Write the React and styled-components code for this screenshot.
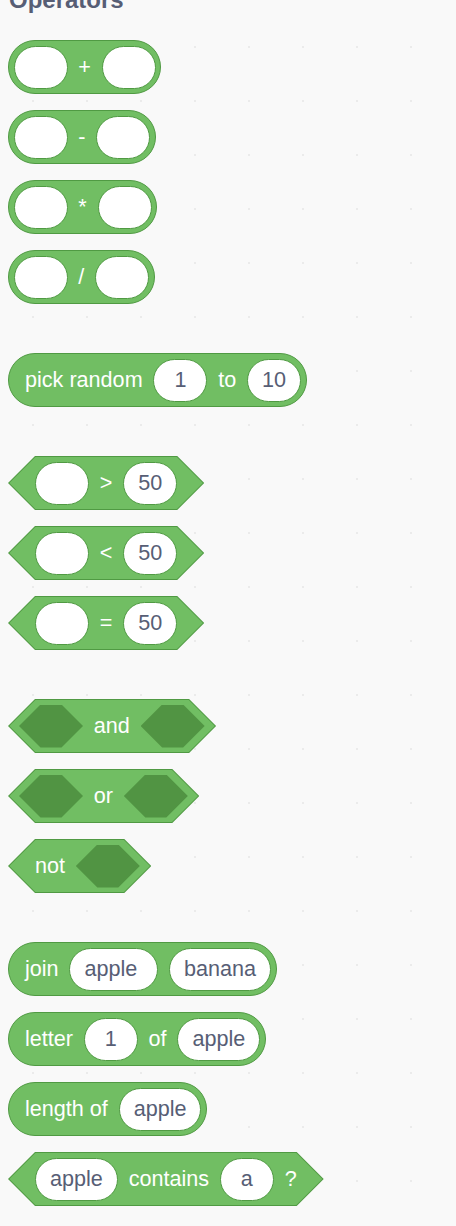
import styled, { createGlobalStyle } from 'styled-components';

const GlobalStyle = createGlobalStyle`
  html, body {
    margin: 0;
    padding: 0;
  }
  body {
    background-color: #f9f9f9;
    background-image: radial-gradient(circle, #ebebeb 1px, transparent 1.5px);
    background-size: 54px 54px;
    background-position: 6px 20px;
    font-family: "Liberation Sans", Arial, sans-serif;
    overflow: hidden;
  }
`

const Page = styled.div`
  display: flex;
  flex-direction: column;
  align-items: flex-start;
  padding-left: 8px;
`

const Heading = styled.h2`
  margin: -12px 0 28px 1px;
  font-size: 24px;
  line-height: 24px;
  font-weight: bold;
  color: #575e75;
`

const Group = styled.div`
  display: flex;
  flex-direction: column;
  align-items: flex-start;
  gap: 16px;

  & + & {
    margin-top: 49px;
  }
`

const Reporter = styled.div`
  display: inline-flex;
  align-items: center;
  gap: 10.8px;
  height: 54px;
  box-sizing: border-box;
  padding: 0 ${props => props.$r === 'text' ? 16 : 4.5}px 0 ${props => props.$l === 'text' ? 16 : 4.5}px;
  background: #71be63;
  border: 1px solid #509a43;
  border-radius: 27px;
`

const Predicate = styled.div`
  position: relative;
  isolation: isolate;
  display: inline-flex;
  align-items: center;
  gap: 10.8px;
  height: 54px;
  box-sizing: border-box;
  padding: 0 ${props => props.$r === 'hex' ? 11.5 : 27}px 0 ${props => props.$l === 'hex' ? 11 : 27}px;

  &::before,
  &::after {
    content: '';
    position: absolute;
    z-index: -1;
  }
  &::before {
    inset: 0;
    background: #509a43;
    clip-path: polygon(27px 0, calc(100% - 27px) 0, 100% 50%, calc(100% - 27px) 100%, 27px 100%, 0 50%);
  }
  &::after {
    inset: 1px 1.4px;
    background: #71be63;
    clip-path: polygon(26px 0, calc(100% - 26px) 0, 100% 50%, calc(100% - 26px) 100%, 26px 100%, 0 50%);
  }
`

const Label = styled.span`
  color: #fff;
  font-size: 21.6px;
  white-space: pre;
`

const Slot = styled.span`
  display: inline-flex;
  align-items: center;
  justify-content: center;
  height: 43px;
  min-width: 54px;
  box-sizing: border-box;
  padding: 0 14px;
  background: #fff;
  border: 1px solid #509a43;
  border-radius: 22px;
  color: #575e75;
  font-size: 21.6px;
  white-space: pre;
`

const BoolSlot = styled.span`
  display: block;
  width: 64px;
  height: 43px;
  background: #519443;
  clip-path: polygon(21.5px 0, calc(100% - 21.5px) 0, 100% 50%, calc(100% - 21.5px) 100%, 21.5px 100%, 0 50%);
`

const math = ['+', '-', '*', '/']
const compare = ['>', '<', '=']

export default function App() {
  return (
    <>
      <GlobalStyle />
      <Page>
        <Heading>Operators</Heading>

        <Group>
          {math.map(op => (
            <Reporter key={op}>
              <Slot />
              <Label>{op}</Label>
              <Slot />
            </Reporter>
          ))}
        </Group>

        <Group>
          <Reporter $l="text">
            <Label>pick random</Label>
            <Slot>1</Slot>
            <Label>to</Label>
            <Slot>10</Slot>
          </Reporter>
        </Group>

        <Group>
          {compare.map(op => (
            <Predicate key={op}>
              <Slot />
              <Label>{op}</Label>
              <Slot>50</Slot>
            </Predicate>
          ))}
        </Group>

        <Group>
          <Predicate $l="hex" $r="hex">
            <BoolSlot />
            <Label>and</Label>
            <BoolSlot />
          </Predicate>
          <Predicate $l="hex" $r="hex">
            <BoolSlot />
            <Label>or</Label>
            <BoolSlot />
          </Predicate>
          <Predicate $r="hex">
            <Label>not</Label>
            <BoolSlot />
          </Predicate>
        </Group>

        <Group>
          <Reporter $l="text">
            <Label>join</Label>
            <Slot>apple </Slot>
            <Slot>banana</Slot>
          </Reporter>
          <Reporter $l="text">
            <Label>letter</Label>
            <Slot>1</Slot>
            <Label>of</Label>
            <Slot>apple</Slot>
          </Reporter>
          <Reporter $l="text">
            <Label>length of</Label>
            <Slot>apple</Slot>
          </Reporter>
          <Predicate>
            <Slot>apple</Slot>
            <Label>contains</Label>
            <Slot>a</Slot>
            <Label>?</Label>
          </Predicate>
        </Group>
      </Page>
    </>
  )
}
